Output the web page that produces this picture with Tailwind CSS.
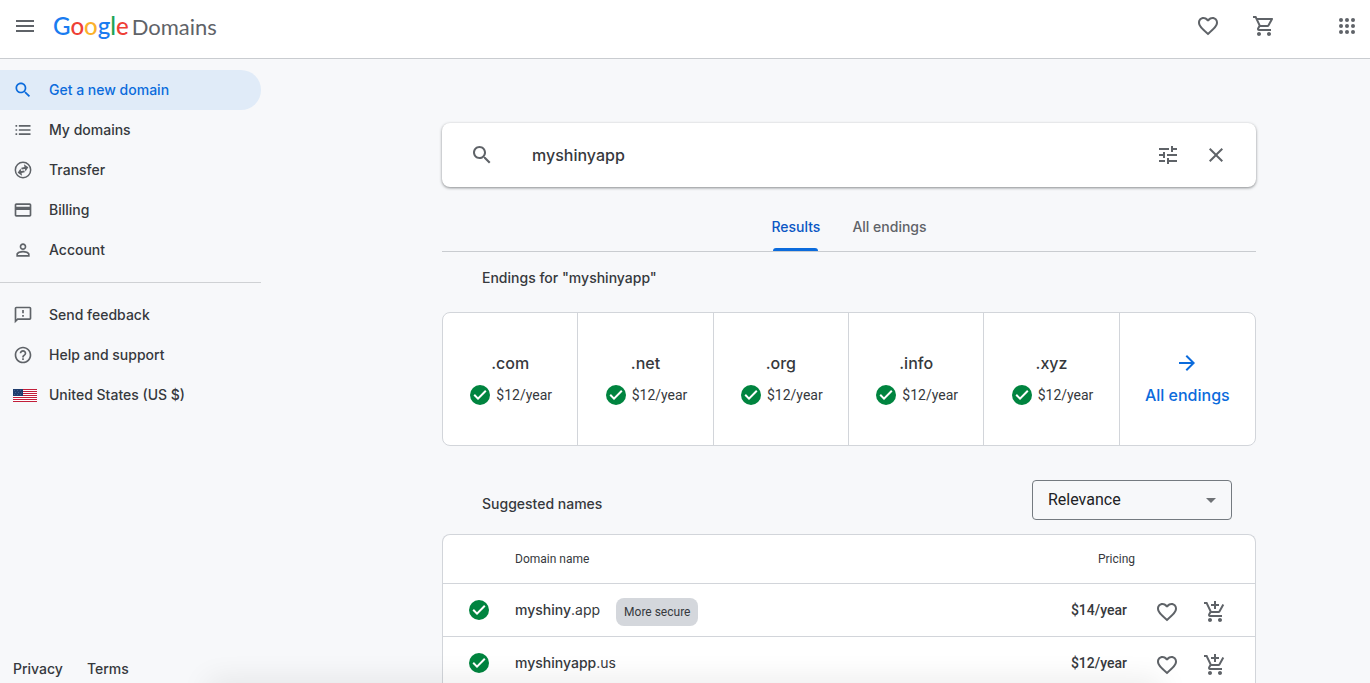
<!DOCTYPE html>
<html lang="en">

<head>
  <meta charset="UTF-8">
  <meta name="viewport" content="width=device-width, initial-scale=1.0">
  <title>Google Domains</title>
  <script src="https://cdn.jsdelivr.net/npm/@tailwindcss/browser@4"></script>
</head>

<body class="h-screen overflow-hidden flex flex-col bg-[#f7f8fa] text-[#36393d] font-['Inter',sans-serif] text-sm">

  <!-- icons -->
  <svg class="hidden">
    <symbol id="heart" viewBox="0 0 24 24">
      <path d="M16.5 3c-1.74 0-3.41.81-4.5 2.09C10.91 3.81 9.24 3 7.5 3 4.42 3 2 5.42 2 8.5c0 3.78 3.4 6.86 8.55 11.54L12 21.35l1.45-1.32C18.6 15.36 22 12.28 22 8.5 22 5.42 19.58 3 16.5 3zm-4.4 15.55l-.1.1-.1-.1C7.14 14.24 4 11.39 4 8.5 4 6.5 5.5 5 7.5 5c1.54 0 3.04.99 3.57 2.36h1.87C13.46 5.99 14.96 5 16.5 5c2 0 3.5 1.5 3.5 3.5 0 2.89-3.14 5.74-7.9 10.05z" />
    </symbol>
    <symbol id="search" viewBox="0 0 24 24">
      <path d="M15.5 14h-.79l-.28-.27C15.41 12.59 16 11.11 16 9.5 16 5.91 13.09 3 9.5 3S3 5.91 3 9.5 5.91 16 9.5 16c1.61 0 3.09-.59 4.23-1.57l.27.28v.79l5 4.99L20.49 19l-4.99-5zm-6 0C7.01 14 5 11.99 5 9.5S7.01 5 9.5 5 14 7.01 14 9.5 11.99 14 9.5 14z" />
    </symbol>
    <symbol id="check" viewBox="0 0 24 24">
      <path fill="#00843f" d="M12 2a10 10 0 1 0 0 20 10 10 0 0 0 0-20z" />
      <path fill="#fff" d="M10 17l-4.5-4.5 1.41-1.41L10 14.17l7.09-7.09 1.41 1.42z" />
    </symbol>
    <symbol id="add-cart" viewBox="0 0 24 24">
      <path d="M11 9h2V6h3V4h-3V1h-2v3H8v2h3v3zm-4 9c-1.1 0-1.99.9-1.99 2S5.9 22 7 22s2-.9 2-2-.9-2-2-2zm10 0c-1.1 0-1.99.9-1.99 2s.89 2 1.99 2 2-.9 2-2-.9-2-2-2zm-8.9-5h7.45c.75 0 1.41-.41 1.75-1.03l3.86-7.01L19.42 4l-3.87 7H8.53L4.27 2H1v2h2l3.6 7.59-1.35 2.44C4.52 15.37 5.48 17 7 17h12v-2H7l1.1-2z" />
    </symbol>
  </svg>

  <header class="shrink-0 flex items-center h-[59px] pl-[13px] pr-[11px] pb-1.5 bg-white border-b border-[#c9ccd0] text-[#5f6368]">
    <button aria-label="Main menu">
      <svg class="size-6 fill-current" viewBox="0 0 24 24"><path d="M3 18h18v-2H3v2zm0-5h18v-2H3v2zm0-7v2h18V6H3z" /></svg>
    </button>
    <a href="#" class="flex items-baseline gap-[3px] ml-4 leading-7 font-['Lato',sans-serif]">
      <span class="text-2xl leading-7 font-medium"><span class="text-[#1a7cf0]">G</span><span class="text-[#ee4035]">o</span><span class="text-[#fbb12c]">o</span><span class="text-[#1a7cf0]">g</span><span class="text-[#1ea455]">l</span><span class="text-[#ee4035]">e</span></span>
      <span class="text-[22px]">Domains</span>
    </a>
    <div class="ml-auto flex items-center">
      <button aria-label="Favorites"><svg class="size-6 fill-current"><use href="#heart" /></svg></button>
      <button aria-label="Cart" class="ml-8">
        <svg class="size-6 fill-current" viewBox="0 0 24 24"><path d="M15.55 13c.75 0 1.41-.41 1.75-1.03l3.58-6.49c.37-.66-.11-1.48-.87-1.48H5.21l-.94-2H1v2h2l3.6 7.59-1.35 2.44C4.52 15.37 5.48 17 7 17h12v-2H7l1.1-2h7.45zM6.16 6h12.15l-2.76 5H8.53L6.16 6zM7 18c-1.1 0-1.99.9-1.99 2S5.9 22 7 22s2-.9 2-2-.9-2-2-2zm10 0c-1.1 0-1.99.9-1.99 2s.89 2 1.99 2 2-.9 2-2-.9-2-2-2z" /></svg>
      </button>
      <button aria-label="Google apps" class="ml-[59px]">
        <svg class="size-6 fill-current" viewBox="0 0 24 24">
          <circle cx="6" cy="6" r="2" /><circle cx="12" cy="6" r="2" /><circle cx="18" cy="6" r="2" />
          <circle cx="6" cy="12" r="2" /><circle cx="12" cy="12" r="2" /><circle cx="18" cy="12" r="2" />
          <circle cx="6" cy="18" r="2" /><circle cx="12" cy="18" r="2" /><circle cx="18" cy="18" r="2" />
        </svg>
      </button>
    </div>
  </header>

  <div class="flex flex-1 min-h-0">
    <aside class="shrink-0 flex flex-col w-[261px] pt-[11px] font-medium">
      <nav class="flex flex-col pb-3 border-b border-[#cfd1d4]">
        <a href="#" class="flex items-center gap-4 h-10 pl-[13px] rounded-r-full bg-[#e0ebf8] text-[#0b6bdc]">
          <svg class="size-5 fill-current"><use href="#search" /></svg>Get a new domain</a>
        <a href="#" class="flex items-center gap-4 h-10 pl-[13px]">
          <svg class="size-5 fill-[#5f6368]" viewBox="0 0 24 24"><path d="M3 6h2v2H3zm0 5h2v2H3zm0 5h2v2H3zM7 6h14v2H7zm0 5h14v2H7zm0 5h14v2H7z" /></svg>My domains</a>
        <a href="#" class="flex items-center gap-4 h-10 pl-[13px]">
          <svg class="size-5 fill-[#5f6368]" viewBox="0 0 24 24">
            <circle cx="12" cy="12" r="9.2" fill="none" stroke="#5f6368" stroke-width="1.8" />
            <path transform="rotate(-12 12 12)" d="M14.500 5.500l4.500 4.500-4.500 4.500V11.200h-4V8.800h4zM9.500 18.500L5 14l4.500-4.500v3.300h4v2.400h-4z" />
          </svg>Transfer</a>
        <a href="#" class="flex items-center gap-4 h-10 pl-[13px]">
          <svg class="size-5 fill-[#5f6368]" viewBox="0 0 24 24"><path d="M20 4H4c-1.110 0-1.990.89-1.990 2L2 18c0 1.110.89 2 2 2h16c1.110 0 2-.89 2-2V6c0-1.110-.89-2-2-2zm0 14H4v-6h16v6zm0-10H4V6h16v2z" /></svg>Billing</a>
        <a href="#" class="flex items-center gap-4 h-10 pl-[13px]">
          <svg class="size-5 fill-[#5f6368]" viewBox="0 0 24 24"><path d="M12 6c1.100 0 2 .9 2 2s-.9 2-2 2-2-.9-2-2 .9-2 2-2m0 9c2.700 0 5.800 1.290 6 2v1H6v-.99c.2-.72 3.300-2.010 6-2.010m0-11C9.790 4 8 5.790 8 8s1.790 4 4 4 4-1.790 4-4-1.790-4-4-4zm0 9c-2.670 0-8 1.340-8 4v3h16v-3c0-2.660-5.330-4-8-4z" /></svg>Account</a>
      </nav>
      <nav class="flex flex-col pt-3">
        <a href="#" class="flex items-center gap-4 h-10 pl-[13px]">
          <svg class="size-5 fill-[#5f6368]" viewBox="0 0 24 24"><path d="M20 2H4c-1.100 0-1.990.9-1.990 2L2 22l4-4h14c1.100 0 2-.9 2-2V4c0-1.100-.9-2-2-2zm0 14H5.170L4 17.170V4h16v12zM11 12h2v2h-2zm0-6h2v4h-2z" /></svg>Send feedback</a>
        <a href="#" class="flex items-center gap-4 h-10 pl-[13px]">
          <svg class="size-5 fill-[#5f6368]" viewBox="0 0 24 24"><path d="M11 18h2v-2h-2v2zm1-16C6.480 2 2 6.480 2 12s4.480 10 10 10 10-4.480 10-10S17.520 2 12 2zm0 18c-4.410 0-8-3.590-8-8s3.590-8 8-8 8 3.590 8 8-3.590 8-8 8zm0-14c-2.210 0-4 1.790-4 4h2c0-1.100.9-2 2-2s2 .9 2 2c0 2-3 1.750-3 5h2c0-2.250 3-2.500 3-5 0-2.210-1.790-4-4-4z" /></svg>Help and support</a>
        <a href="#" class="flex items-center gap-3 h-10 pl-[13px]">
          <svg class="w-6 h-3.5" viewBox="0 0 24 14">
            <rect y="1" width="24" height="13" fill="#fff" />
            <g fill="#c21f3a">
              <rect y="1" width="24" height="1" />
              <rect y="3" width="24" height="1" />
              <rect y="5" width="24" height="1" />
              <rect y="7" width="24" height="1" />
              <rect y="9" width="24" height="1" />
              <rect y="11" width="24" height="1" />
              <rect y="13" width="24" height="1" />
            </g>
            <rect y="1" width="10" height="7" fill="#1f3d6d" />
            <path fill="#3f5b8a" d="M1 2h1v1H1zM4 2h1v1H4zM7 2h1v1H7zM2 4h1v1H2zM5 4h1v1H5zM8 4h1v1H8zM1 6h1v1H1zM4 6h1v1H4zM7 6h1v1H7z" />
          </svg>United States (US $)</a>
      </nav>
      <div class="mt-auto flex gap-6 pl-[13px] pb-1">
        <a href="#">Privacy</a>
        <a href="#">Terms</a>
      </div>
    </aside>

    <main class="flex-1 min-w-0 pt-16 pl-[181px] pr-[114px]">
      <form class="flex items-center h-16 px-7 rounded-lg bg-white shadow-[0_1px_3px_rgba(60,64,67,0.6)] text-[#5f6368]">
        <svg class="size-6 fill-current"><use href="#search" /></svg>
        <input type="text" aria-label="Search for a domain" value="myshinyapp" class="flex-1 min-w-0 ml-[38px] text-base font-medium text-[#36393d] outline-none">
        <button type="button" aria-label="Filters">
          <svg class="size-6 fill-current" viewBox="0 0 24 24"><path d="M3 17v2h6v-2H3zM3 5v2h10V5H3zm10 16v-2h8v-2h-8v-2h-2v6h2zM7 9v2H3v2h4v2h2V9H7zm14 4v-2H11v2h10zm-6-4h2V7h4V5h-4V3h-2v6z" /></svg>
        </button>
        <button type="button" aria-label="Clear" class="ml-6">
          <svg class="size-6 fill-current" viewBox="0 0 24 24"><path d="M19 6.410L17.590 5 12 10.590 6.410 5 5 6.410 10.590 12 5 17.590 6.410 19 12 13.410 17.590 19 19 17.590 13.410 12z" /></svg>
        </button>
      </form>

      <div class="flex justify-center gap-8 h-[65px] pt-4 border-b border-[#c9ccd0] font-medium">
        <button class="flex flex-col h-full text-[#0b57c4]">
          <span class="flex-1 pt-3.5">Results</span>
          <span class="h-[3px] mx-0.5 self-stretch rounded-t-sm bg-[#0b6bdc]"></span>
        </button>
        <button class="flex flex-col h-full text-[#5f6368]"><span class="pt-3.5">All endings</span></button>
      </div>

      <h2 class="pt-4 pl-10 font-medium leading-5">Endings for "myshinyapp"</h2>

      <div class="grid grid-cols-6 h-[134px] mt-6 rounded-lg border border-[#d2d5da] divide-x divide-[#d2d5da] bg-white">
        <button class="flex flex-col items-center justify-center gap-2">
          <span class="text-base font-medium">.com</span>
          <span class="flex items-center gap-1 font-['Roboto',sans-serif]"><svg class="size-6"><use href="#check" /></svg>$12/year</span>
        </button>
        <button class="flex flex-col items-center justify-center gap-2">
          <span class="text-base font-medium">.net</span>
          <span class="flex items-center gap-1 font-['Roboto',sans-serif]"><svg class="size-6"><use href="#check" /></svg>$12/year</span>
        </button>
        <button class="flex flex-col items-center justify-center gap-2">
          <span class="text-base font-medium">.org</span>
          <span class="flex items-center gap-1 font-['Roboto',sans-serif]"><svg class="size-6"><use href="#check" /></svg>$12/year</span>
        </button>
        <button class="flex flex-col items-center justify-center gap-2">
          <span class="text-base font-medium">.info</span>
          <span class="flex items-center gap-1 font-['Roboto',sans-serif]"><svg class="size-6"><use href="#check" /></svg>$12/year</span>
        </button>
        <button class="flex flex-col items-center justify-center gap-2">
          <span class="text-base font-medium">.xyz</span>
          <span class="flex items-center gap-1 font-['Roboto',sans-serif]"><svg class="size-6"><use href="#check" /></svg>$12/year</span>
        </button>
        <button class="flex flex-col items-center justify-center gap-2 text-[#0b6bdc]">
          <svg class="size-6 fill-current" viewBox="0 0 24 24"><path d="M12 4l-1.410 1.410L16.170 11H4v2h12.170l-5.580 5.590L12 20l8-8z" /></svg>
          <span class="text-base font-medium">All endings</span>
        </button>
      </div>

      <div class="flex items-center justify-between mt-[34px] pl-10 pr-6">
        <h2 class="pt-2 font-medium">Suggested names</h2>
        <div class="relative w-[200px]">
          <select aria-label="Sort by" class="appearance-none w-full h-10 px-[15px] rounded border border-[#747a80] text-base text-[#202124] font-['Roboto',sans-serif]">
            <option>Relevance</option>
            <option>Price</option>
          </select>
          <svg class="absolute right-4 top-[18px] w-2.5 h-[5px] fill-[#6f7276] pointer-events-none" viewBox="0 0 10 5"><path d="M0 0h10L5 5z" /></svg>
        </div>
      </div>

      <div class="mt-3.5 rounded-t-lg border border-b-0 border-[#d2d5da] bg-white">
        <table class="w-full">
          <thead>
            <tr class="h-12 text-xs font-['Roboto',sans-serif]">
              <th class="w-[72px]"></th>
              <th class="text-left font-normal">Domain name</th>
              <th class="text-right font-normal">Pricing</th>
              <th class="w-[120px]"></th>
            </tr>
          </thead>
          <tbody>
            <tr class="h-[53px] border-t border-[#d2d5da]">
              <td class="pl-6"><svg class="size-6"><use href="#check" /></svg></td>
              <td>
                <div class="flex items-center gap-4">
                  <span><span class="font-medium">myshiny</span>.app</span>
                  <span class="mt-1 px-2 py-1.5 rounded-lg bg-[#d4d7dc] text-xs font-['Roboto',sans-serif]">More secure</span>
                </div>
              </td>
              <td class="pr-2 text-right font-medium font-['Roboto',sans-serif]">$14/year</td>
              <td>
                <div class="flex gap-6 pt-1 pl-5 text-[#5f6368]">
                  <button aria-label="Add myshiny.app to favorites"><svg class="size-6 fill-current"><use href="#heart" /></svg></button>
                  <button aria-label="Add myshiny.app to cart"><svg class="size-6 fill-current"><use href="#add-cart" /></svg></button>
                </div>
              </td>
            </tr>
            <tr class="h-[53px] border-t border-[#d2d5da]">
              <td class="pl-6"><svg class="size-6"><use href="#check" /></svg></td>
              <td><span class="font-medium">myshinyapp</span>.us</td>
              <td class="pr-2 text-right font-medium font-['Roboto',sans-serif]">$12/year</td>
              <td>
                <div class="flex gap-6 pt-1 pl-5 text-[#5f6368]">
                  <button aria-label="Add myshinyapp.us to favorites"><svg class="size-6 fill-current"><use href="#heart" /></svg></button>
                  <button aria-label="Add myshinyapp.us to cart"><svg class="size-6 fill-current"><use href="#add-cart" /></svg></button>
                </div>
              </td>
            </tr>
          </tbody>
        </table>
      </div>
    </main>
  </div>

  <!-- soft shadow along the bottom edge -->
  <div class="fixed top-full inset-x-52 h-4 shadow-[0_0_30px_rgba(0,0,0,0.12)] pointer-events-none"></div>
</body>

</html>
